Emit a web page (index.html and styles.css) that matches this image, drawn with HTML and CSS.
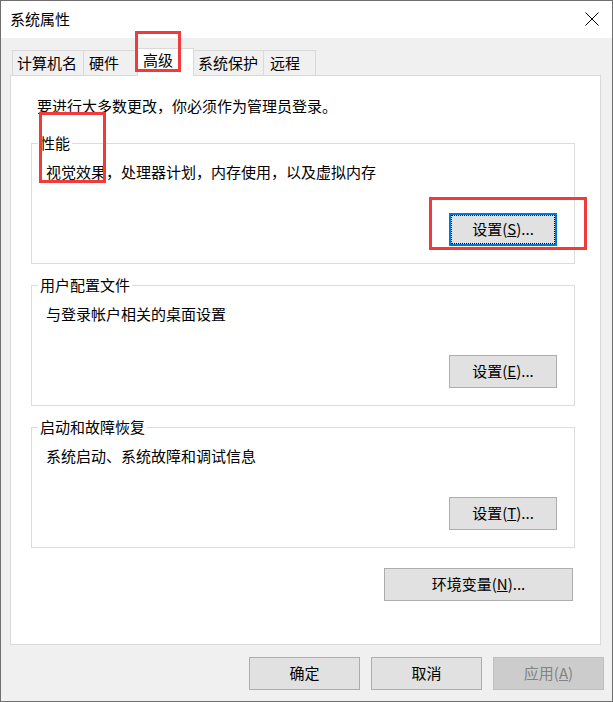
FILE: index.html
```html
<!DOCTYPE html>
<html lang="zh-CN">
<head>
<meta charset="utf-8">
<title>系统属性</title>
<link rel="stylesheet" href="styles.css">
</head>
<body>
<div class="window">
  <div class="titlebar">
    <span class="title">系统属性</span>
    <svg class="close" width="14" height="14" viewBox="0 0 14 14"><path d="M0.5 0.5 L13.5 13.5 M13.5 0.5 L0.5 13.5" stroke="#000" stroke-width="1" fill="none"/></svg>
  </div>
  <div class="tabs">
    <div class="tab t1">计算机名</div>
    <div class="tab t2">硬件</div>
    <div class="tab t3 selected">高级</div>
    <div class="tab t4">系统保护</div>
    <div class="tab t5">远程</div>
  </div>
  <div class="panel">
    <p class="admin">要进行大多数更改，你必须作为管理员登录。</p>
    <div class="group">
      <div class="legend">性能</div>
      <p class="desc">视觉效果，处理器计划，内存使用，以及虚拟内存</p>
      <div class="actions"><button class="btn set focus">设置(<u>S</u>)...</button></div>
    </div>
    <div class="group">
      <div class="legend">用户配置文件</div>
      <p class="desc">与登录帐户相关的桌面设置</p>
      <div class="actions"><button class="btn set">设置(<u>E</u>)...</button></div>
    </div>
    <div class="group">
      <div class="legend">启动和故障恢复</div>
      <p class="desc">系统启动、系统故障和调试信息</p>
      <div class="actions"><button class="btn set">设置(<u>T</u>)...</button></div>
    </div>
    <div class="env-row"><button class="btn env">环境变量(<u>N</u>)...</button></div>
  </div>
  <div class="footer">
    <button class="btn dlg">确定</button>
    <button class="btn dlg">取消</button>
    <button class="btn dlg" disabled>应用(<u>A</u>)</button>
  </div>
  <div class="mark m1"></div>
  <div class="mark m2"></div>
  <div class="mark m3"></div>
</div>
</body>
</html>
```

FILE: styles.css
```css
* { box-sizing: border-box; }
html, body { margin: 0; padding: 0; }
body {
  width: 613px;
  height: 702px;
  overflow: hidden;
  font-family: "Noto Sans CJK SC", "Noto Sans", sans-serif;
  font-size: 15px;
  line-height: 20px;
  color: #000;
  background: #f0f0f0;
}
.window {
  position: relative;
  width: 613px;
  height: 702px;
  border: 1px solid #6f6f6f;
  background: #f0f0f0;
}
.titlebar {
  height: 37px;
  background: #fff;
  display: flex;
  justify-content: space-between;
  align-items: flex-start;
  padding: 8px 13px 0 9px;
}
.close { margin-top: 3px; display: block; }

.tabs {
  display: flex;
  align-items: flex-end;
  height: 27px;
  margin-top: 10px;
  padding-left: 11px;
}
.tab {
  height: 25px;
  border: 1px solid #d9d9d9;
  border-bottom: 0;
  margin-left: -1px;
  padding: 2px 0 0 4px;
  background: #f0f0f0;
  white-space: nowrap;
}
.tab.t1 { margin-left: 0; width: 72px; padding-left: 4px; }
.tab.t2 { width: 55px; padding-left: 5px; }
.tab.t3 { width: 57px; padding-left: 5px; }
.tab.t4 { width: 71px; padding-left: 4px; }
.tab.t5 { width: 53px; padding-left: 6px; }
.tab.selected {
  height: 28px;
  margin-bottom: -1px;
  padding-top: 1px;
  background: #fff;
  position: relative;
  z-index: 1;
}

.panel {
  margin-left: 9px;
  width: 591px;
  height: 570px;
  border: 1px solid #d9d9d9;
  background: #fff;
  padding: 20px 0 0 20px;
}
.admin { margin: 0 0 0 6px; }
.group {
  width: 544px;
  border: 1px solid #dcdcdc;
  margin-top: 21px;
}
.admin + .group { margin-top: 27px; }
.legend {
  width: fit-content;
  margin: -11px 0 0 6px;
  padding: 0 2px;
  background: #fff;
}
.desc { margin: 9px 0 0 14px; }
.actions {
  display: flex;
  justify-content: flex-end;
  padding: 31px 17px 17px 0;
}

.btn {
  height: 33px;
  border: 1px solid #adadad;
  background: #e1e1e1;
  font-family: inherit;
  font-size: 15px;
  line-height: 20px;
  color: #000;
  padding: 0 0 2px 0;
  margin: 0;
}
.btn u { text-underline-offset: 1px; }
.btn.set { width: 108px; }
.btn.focus {
  border: 2px solid #0078d7;
  outline: 1px dotted #000;
  outline-offset: -3px;
}
.env-row {
  display: flex;
  justify-content: flex-end;
  margin-top: 20px;
  padding-right: 27px;
}
.btn.env { width: 189px; }

.footer {
  display: flex;
  justify-content: flex-end;
  gap: 11px;
  margin-top: 12px;
  padding-right: 8px;
}
.btn.dlg { width: 111px; }
.btn:disabled {
  background: #cccccc;
  border-color: #bfbfbf;
  color: #838383;
}

.mark {
  position: absolute;
  z-index: 5;
  border: 3px solid #f23a3a;
}
.m1 { left: 134px; top: 30px; width: 46px; height: 41px; }
.m2 { left: 38px; top: 111px; width: 67px; height: 71px; }
.m3 { left: 428px; top: 196px; width: 158px; height: 53px; }
```
